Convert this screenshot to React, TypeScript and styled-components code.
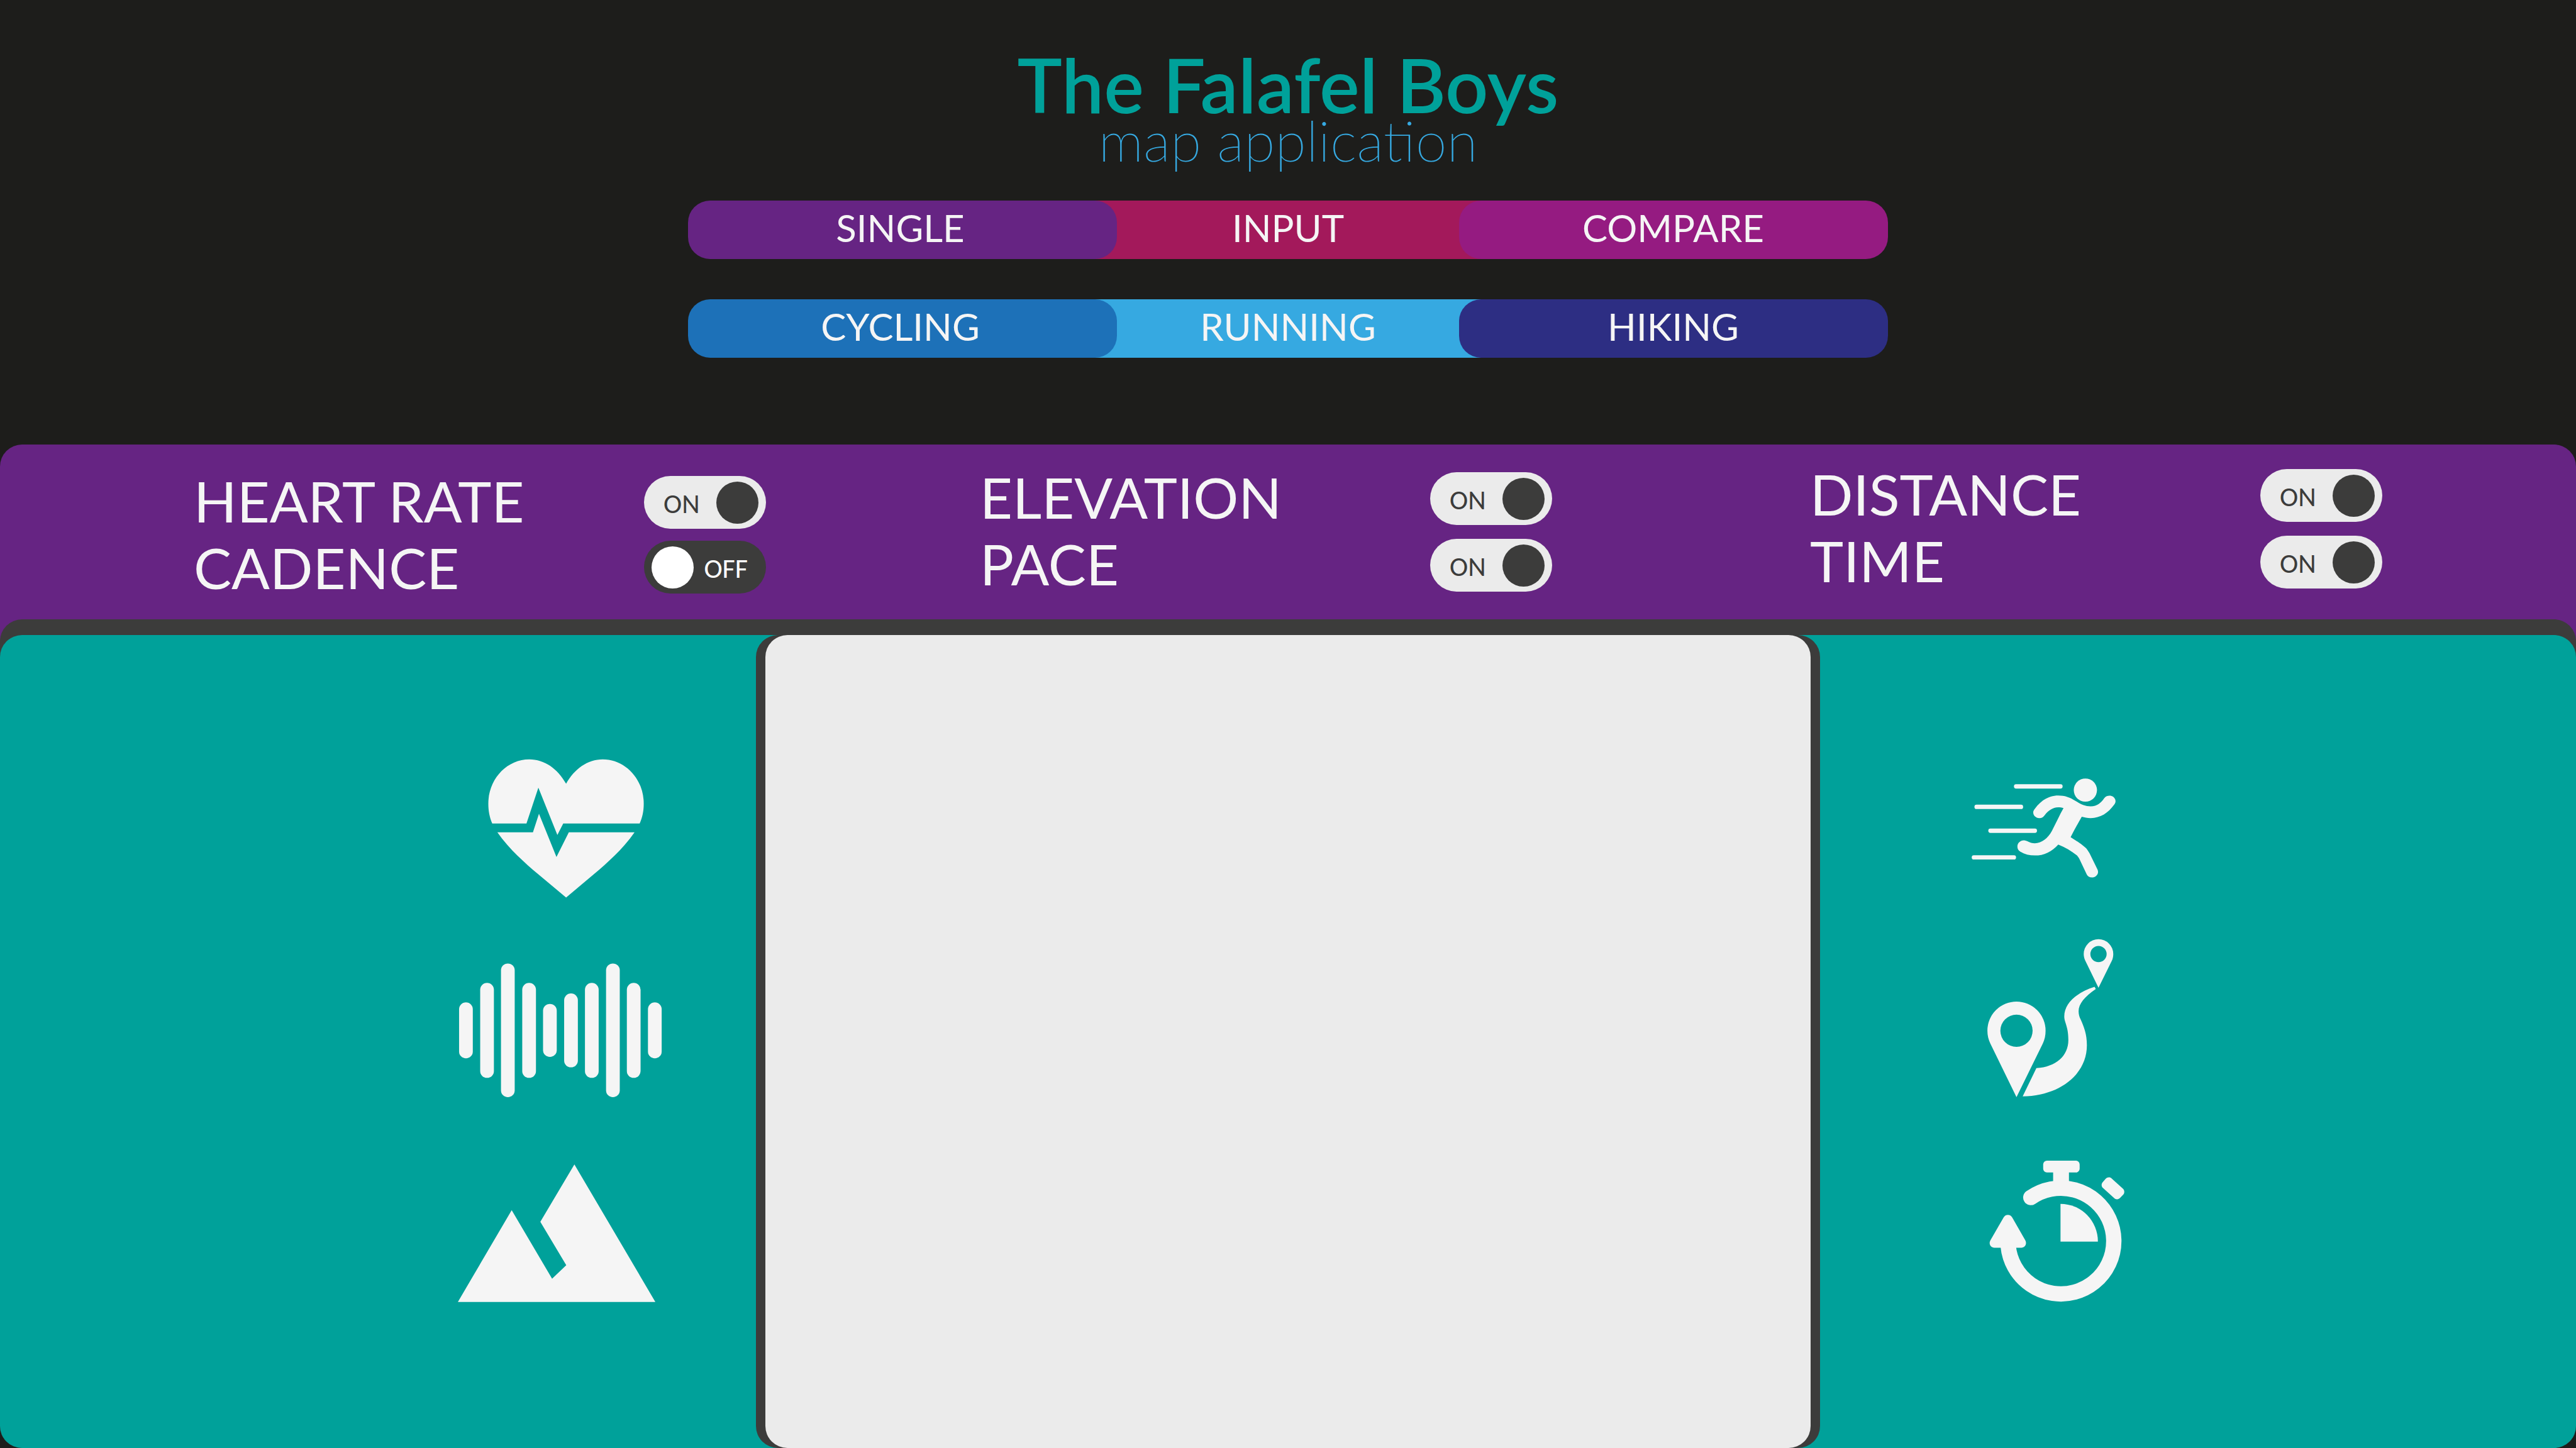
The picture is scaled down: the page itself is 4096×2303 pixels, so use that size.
import React, { useState } from "react";
import styled, { createGlobalStyle } from "styled-components";

const color = {
  page: "#1d1d1b",
  dark: "#3c3c3b",
  light: "#ebebeb",
  ink: "#f5f5f5",
  teal: "#00a19a",
  purple: "#662483",
  crimson: "#a3195b",
  magenta: "#951b81",
  blue: "#1d71b8",
  sky: "#36a9e1",
  navy: "#2d2e83",
};

const GlobalStyle = createGlobalStyle`
  *, *::before, *::after { box-sizing: border-box; }
  body {
    margin: 0;
    background: ${color.page};
    color: ${color.ink};
    font-family: Lato, Carlito, "Open Sans", sans-serif;
  }
`;

const Page = styled.div`
  display: flex;
  flex-direction: column;
  min-height: 100vh;
`;

const Header = styled.header`
  display: flex;
  flex-direction: column;
  align-items: center;
  padding: 82px 0 138px;
`;

const Title = styled.h1`
  margin: 0;
  color: ${color.teal};
  font-size: 120px;
  font-weight: 600;
  line-height: 104px;
`;

const Subtitle = styled.p`
  margin: 0;
  color: ${color.sky};
  font-family: "Lato Thin", Lato, sans-serif;
  font-size: 90px;
  font-weight: 400;
  line-height: 72px;
`;

const Menus = styled.nav`
  display: flex;
  flex-direction: column;
  align-self: stretch;
  align-items: center;
  gap: 64px;
  margin-top: 61px;
`;

const Segments = styled.div`
  display: grid;
  grid-template-columns: 682fr 543fr 682fr;
  width: 46.56%;
  height: 93px;
  isolation: isolate;
`;

const Segment = styled.button<{ $fill: string; $under?: boolean }>`
  position: relative;
  z-index: ${(p) => (p.$under ? 0 : 1)};
  margin: 0 ${(p) => (p.$under ? "-36px" : "0")};
  padding: 0 0 7px;
  border: 0;
  border-radius: ${(p) => (p.$under ? "0" : "35px")};
  background: ${(p) => p.$fill};
  color: ${color.ink};
  font: inherit;
  font-size: 60px;
  line-height: 72px;
  cursor: pointer;

  &:first-child { padding-right: 8px; }
`;

const Stats = styled.section`
  display: grid;
  grid-template-columns: 308fr 910fr 340fr 910fr 410fr 910fr 308fr;
  align-items: start;
  min-height: 313px;
  border-radius: 35px 35px 0 0;
  background: ${color.purple};
`;

const StatGroup = styled.div<{ $column: number; $top: number }>`
  grid-column: ${(p) => p.$column};
  display: flex;
  justify-content: space-between;
  padding-top: ${(p) => p.$top}px;
`;

const StatNames = styled.div`
  display: flex;
  flex-direction: column;
`;

const StatName = styled.label`
  font-size: 90px;
  line-height: 106px;
`;

const Switches = styled.div<{ $gap: number }>`
  display: flex;
  flex-direction: column;
  gap: ${(p) => p.$gap}px;
  padding-top: 14px;
`;

const Track = styled.span<{ $on: boolean }>`
  position: relative;
  display: flex;
  flex-direction: ${(p) => (p.$on ? "row" : "row-reverse")};
  align-items: center;
  justify-content: space-between;
  width: 194px;
  height: 84px;
  padding: ${(p) => (p.$on ? "0 12px 0 31px" : "0 29px 0 12px")};
  border-radius: 42px;
  background: ${(p) => (p.$on ? color.light : color.dark)};
  color: ${(p) => (p.$on ? color.dark : "#fff")};
`;

const SwitchInput = styled.input`
  position: absolute;
  inset: 0;
  width: 100%;
  height: 100%;
  margin: 0;
  opacity: 0;
  cursor: pointer;
`;

const SwitchText = styled.span`
  padding-top: 4px;
  font-family: Carlito, Lato, sans-serif;
  font-size: 44px;
  line-height: 54px;
`;

const Knob = styled.span<{ $on: boolean }>`
  width: 67px;
  height: 67px;
  border-radius: 50%;
  background: ${(p) => (p.$on ? color.dark : "#fff")};
`;

const Workspace = styled.main`
  flex: 1;
  display: flex;
  margin-top: -35px;
  padding-top: 25px;
  border-radius: 35px;
  background: ${color.dark};
`;

const Board = styled.div`
  flex: 1;
  display: grid;
  grid-template-columns: 1202fr 1692fr 1202fr;
  border-radius: 35px;
  background: ${color.teal};
`;

const IconColumn = styled.aside<{ $side: "left" | "right" }>`
  display: flex;
  flex-direction: column;
  align-items: ${(p) => (p.$side === "left" ? "flex-end" : "flex-start")};
  gap: 22px;
  padding: ${(p) => (p.$side === "left" ? "156px 123px 0 0" : "156px 0 0 180px")};
`;

const MapFrame = styled.div`
  display: flex;
  padding: 0 15px;
  border-radius: 35px;
  background: ${color.dark};
`;

const MapPanel = styled.section`
  flex: 1;
  border-radius: 35px;
  background: ${color.light};
`;

const Icon = styled.svg`
  display: block;
  width: 374px;
  height: 302px;
  fill: ${color.ink};
`;

const HeartIcon = () => (
  <Icon viewBox="0 -60 1560 1260" role="img" aria-label="Heart rate">
    <path d="M324 540C306 497 298 455 298 408C298 245 420 114 570 114C670 114 757 175 814 276C868 178 957 114 1057 114C1207 114 1329 245 1329 408C1329 458 1320 500 1302 540H795L756 616L630 302L551 540Z" />
    <path d="M358 598H594L634 475L750 762L832 598H1268C1190 712 1080 806 1000 875L814 1031L627 875C547 806 437 712 358 598Z" />
  </Icon>
);

const bars = [
  [104, 405, 776],
  [244, 276, 906],
  [382, 147, 1034],
  [523, 276, 906],
  [661, 415, 767],
  [801, 346, 836],
  [939, 276, 906],
  [1079, 147, 1034],
  [1217, 276, 906],
  [1357, 405, 776],
];

const CadenceIcon = () => (
  <Icon viewBox="0 -30 1560 1260" role="img" aria-label="Cadence">
    {bars.map(([x, top, bottom]) => (
      <rect key={x} x={x} y={top} width={91} height={bottom - top} rx={45} />
    ))}
  </Icon>
);

const ElevationIcon = () => (
  <Icon viewBox="0 -60 1560 1260" role="img" aria-label="Elevation">
    <path d="M96 1011L453 402L721 857L815 767L643 479L869 99L1406 1011Z" />
  </Icon>
);

const PaceIcon = () => (
  <Icon viewBox="-84 -180 1560 1260" role="img" aria-label="Pace">
    <rect x="451" y="159" width="323" height="29" rx="14" />
    <rect x="189" y="295" width="323" height="29" rx="14" />
    <rect x="281" y="453" width="323" height="29" rx="14" />
    <rect x="171" y="630" width="294" height="29" rx="14" />
    <circle cx="925" cy="198" r="77" />
    <path d="M590 322C628 268 682 234 745 234C800 234 832 253 868 275C900 295 925 306 960 306C1005 306 1030 280 1050 252C1060 239 1073 235 1085 235C1107 235 1125 251 1125 272C1125 280 1122 287 1117 294C1075 351 1026 384 960 384C938 384 920 380 901 375C875 420 850 465 827 510C860 530 895 554 925 579C935 588 945 603 953 618L1004 722C1008 730 1009 736 1009 742C1009 762 990 778 968 778C952 778 940 770 934 758L893 671C887 658 880 643 869 632C832 601 790 577 745 559C703 607 650 632 590 632C554 632 522 623 493 606C481 599 474 588 474 573C474 549 493 531 517 531C528 531 536 535 545 540C557 547 572 551 590 551C633 551 677 518 703 469C730 417 755 362 780 318C770 314 757 312 744 312C708 312 677 336 656 363C648 376 636 384 619 384C597 384 579 368 579 346C579 337 583 331 590 322Z" />
  </Icon>
);

const DistanceIcon = () => (
  <Icon viewBox="-204 90 1560 1260" role="img" aria-label="Distance">
    <path
      fillRule="evenodd"
      d="M348 1154L174 797C162 773 155 744 155 713A193 193 0 0 1 541 713C541 744 535 773 523 797ZM348 606A107 107 0 1 0 348 820A107 107 0 1 0 348 606Z"
    />
    <path
      fillRule="evenodd"
      d="M892 428L805 250C799 238 794 220 794 204A98 98 0 0 1 990 204C990 220 987 237 980 250ZM892 150A54 54 0 1 0 892 258A54 54 0 1 0 892 150Z"
    />
    <path d="M866 422L874 436C800 488 760 533 760 584C760 605 766 622 773 637C797 692 815 735 815 810C815 1000 640 1145 389 1149L480 961C610 953 692 880 692 775C692 735 687 705 679 679C671 652 665 640 665 618C665 530 750 458 866 422Z" />
  </Icon>
);

const TimeIcon = () => (
  <Icon viewBox="-204 0 1560 1260" role="img" aria-label="Time">
    <path
      d="M293 700A351 351 0 1 0 443 378"
      fill="none"
      stroke={color.ink}
      strokeWidth="102"
      strokeLinecap="round"
    />
    <path d="M262 511C268 499 279 493 291 493C303 493 314 499 320 511L406 661C410 668 411 673 411 680C411 697 397 711 381 711H201C184 711 170 697 170 680C170 673 172 667 176 660Z" />
    <rect x="525" y="134" width="242" height="78" rx="25" />
    <rect x="591" y="200" width="105" height="90" />
    <path d="M935 259C948 242 967 240 980 252L1055 320C1065 330 1066 348 1057 358L1036 380C1025 392 1008 393 997 383L921 314C911 304 910 288 919 277Z" />
    <path d="M640 420A248 250 0 0 1 888 671H640Z" />
  </Icon>
);

type SwitchProps = { id: string; on: boolean; onChange: (on: boolean) => void };

const Switch = ({ id, on, onChange }: SwitchProps) => (
  <Track $on={on}>
    <SwitchText>{on ? "ON" : "OFF"}</SwitchText>
    <Knob $on={on} />
    <SwitchInput
      id={id}
      type="checkbox"
      role="switch"
      checked={on}
      onChange={(e) => onChange(e.target.checked)}
    />
  </Track>
);

const groups = [
  { column: 2, top: 36, gap: 19, names: ["HEART RATE", "CADENCE"] },
  { column: 4, top: 30, gap: 22, names: ["ELEVATION", "PACE"] },
  { column: 6, top: 25, gap: 22, names: ["DISTANCE", "TIME"] },
];

const toId = (name: string) => name.toLowerCase().replace(" ", "-");

export default function App() {
  const [off, setOff] = useState<string[]>(["CADENCE"]);

  const setStat = (name: string, on: boolean) =>
    setOff((list) => (on ? list.filter((n) => n !== name) : [...list, name]));

  return (
    <Page>
      <GlobalStyle />
      <Header>
        <Title>The Falafel Boys</Title>
        <Subtitle>map application</Subtitle>
        <Menus>
          <Segments>
            <Segment type="button" $fill={color.purple}>SINGLE</Segment>
            <Segment type="button" $fill={color.crimson} $under>INPUT</Segment>
            <Segment type="button" $fill={color.magenta}>COMPARE</Segment>
          </Segments>
          <Segments>
            <Segment type="button" $fill={color.blue}>CYCLING</Segment>
            <Segment type="button" $fill={color.sky} $under>RUNNING</Segment>
            <Segment type="button" $fill={color.navy}>HIKING</Segment>
          </Segments>
        </Menus>
      </Header>
      <Stats>
        {groups.map((group) => (
          <StatGroup key={group.column} $column={group.column} $top={group.top}>
            <StatNames>
              {group.names.map((name) => (
                <StatName key={name} htmlFor={toId(name)}>{name}</StatName>
              ))}
            </StatNames>
            <Switches $gap={group.gap}>
              {group.names.map((name) => (
                <Switch
                  key={name}
                  id={toId(name)}
                  on={!off.includes(name)}
                  onChange={(on) => setStat(name, on)}
                />
              ))}
            </Switches>
          </StatGroup>
        ))}
      </Stats>
      <Workspace>
        <Board>
          <IconColumn $side="left">
            <HeartIcon />
            <CadenceIcon />
            <ElevationIcon />
          </IconColumn>
          <MapFrame>
            <MapPanel aria-label="Map" />
          </MapFrame>
          <IconColumn $side="right">
            <PaceIcon />
            <DistanceIcon />
            <TimeIcon />
          </IconColumn>
        </Board>
      </Workspace>
    </Page>
  );
}
